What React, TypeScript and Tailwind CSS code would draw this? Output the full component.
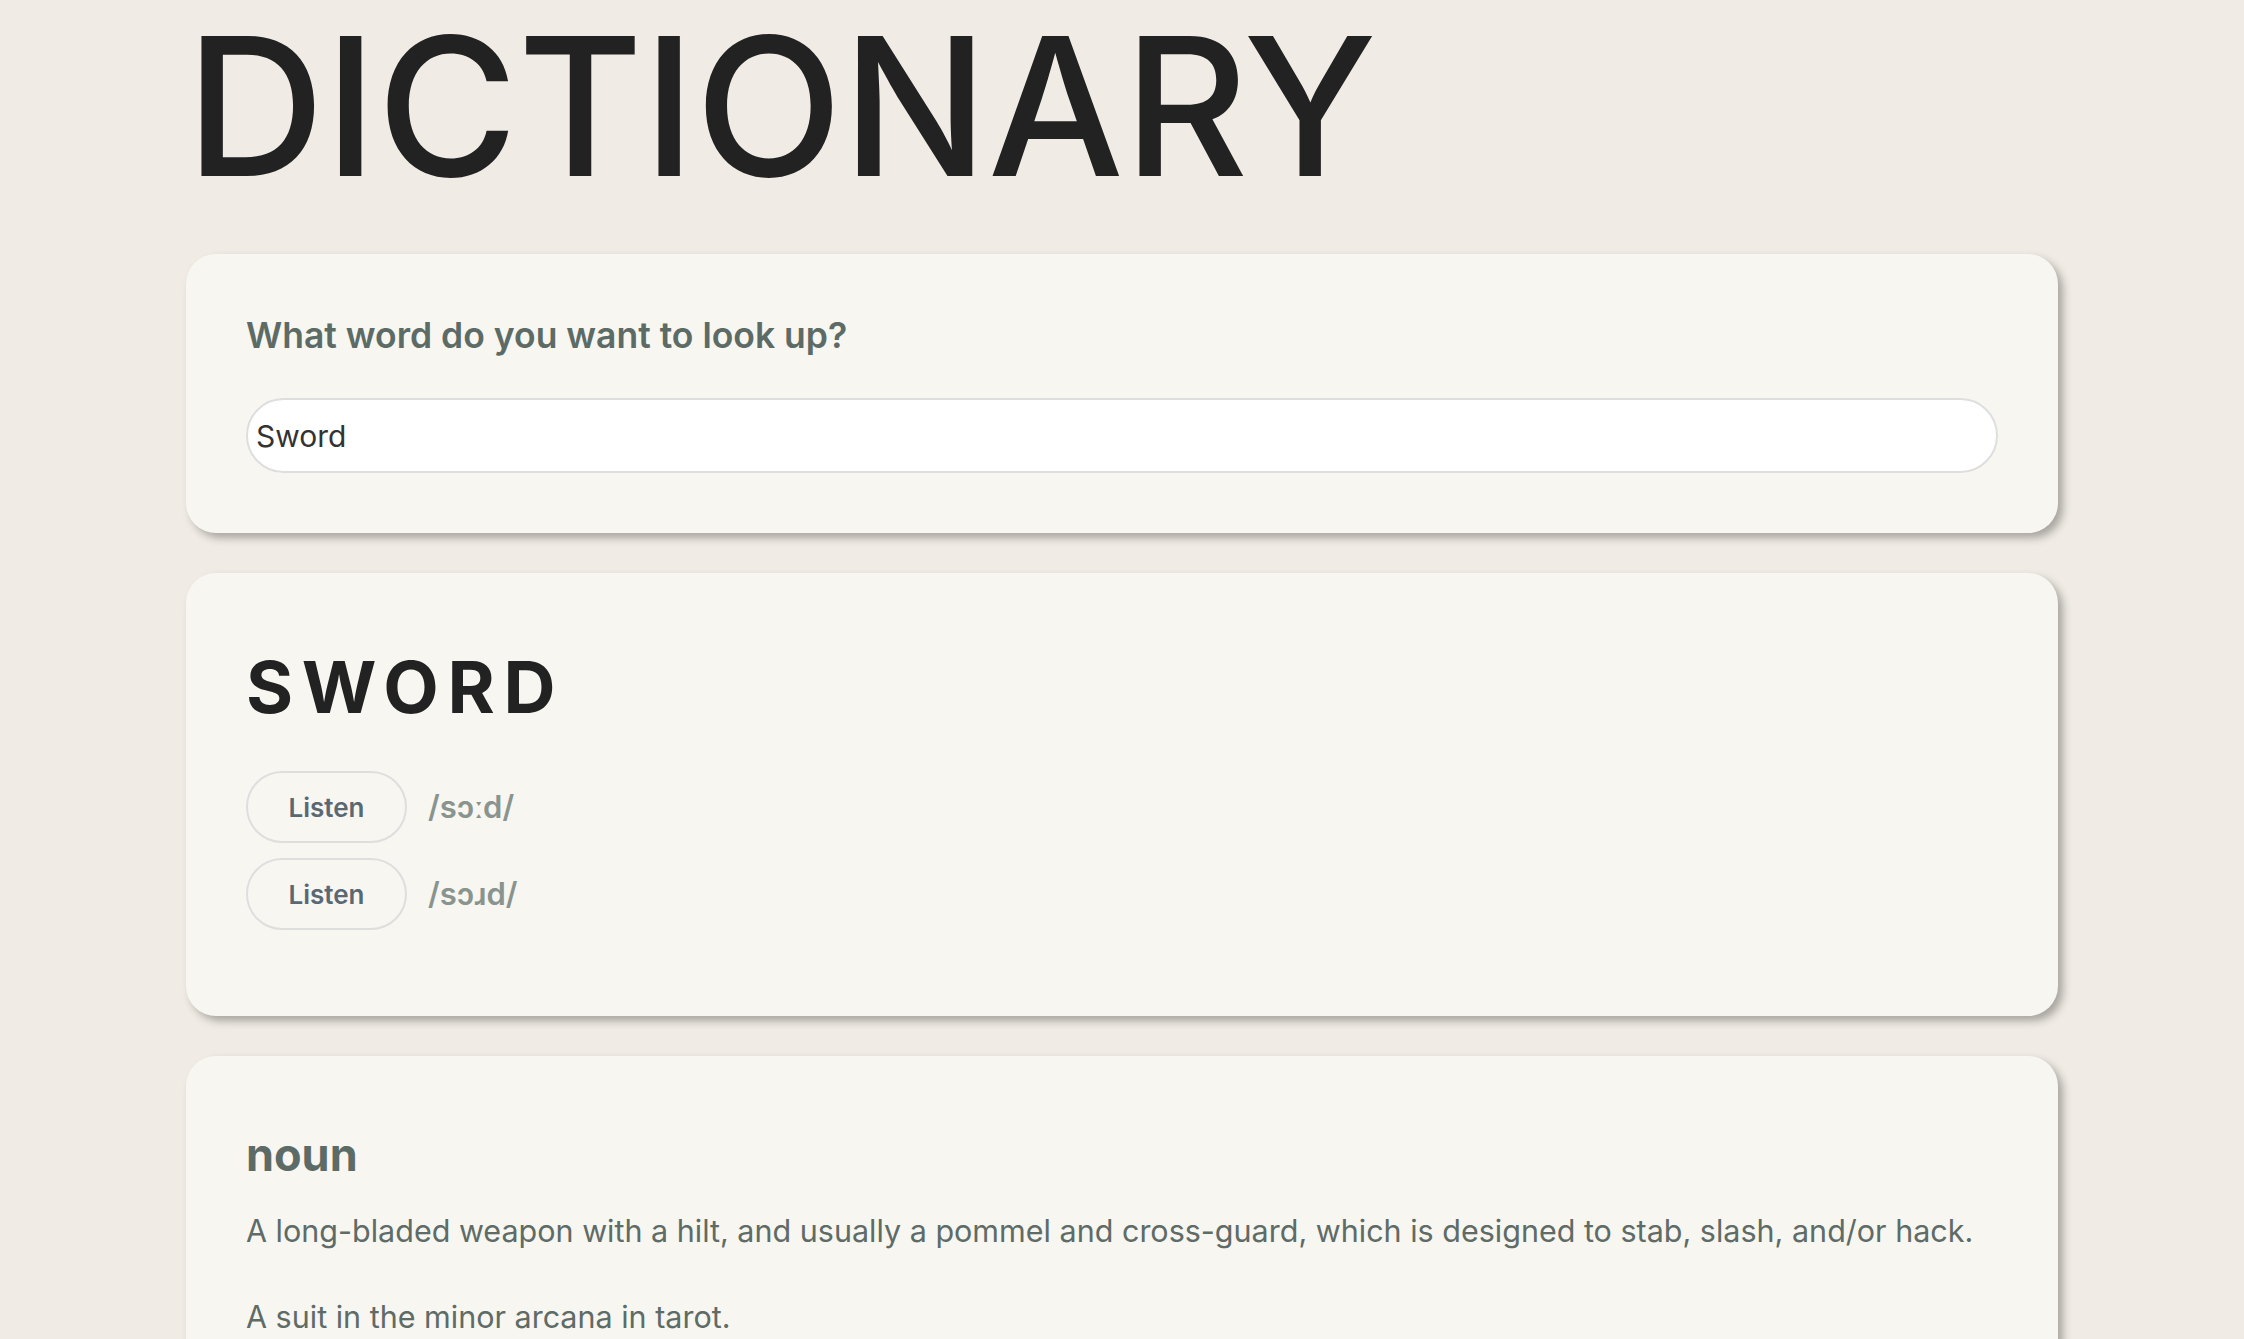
const phonetics = ['/sɔːd/', '/sɔɹd/'];

const definitions = [
  'A long-bladed weapon with a hilt, and usually a pommel and cross-guard, which is designed to stab, slash, and/or hack.',
  'A suit in the minor arcana in tarot.',
  'A card of this suit.',
];

const cardClass =
  'rounded-[30px] bg-[#f7f6f1] p-[60px] shadow-[5px_5px_8px_rgba(0,0,0,0.3)]';

export default function App() {
  return (
    <div className="min-h-screen bg-[#f0ece5] font-['Inter','Noto_Sans',sans-serif]">
      <div className="mx-auto w-[1872px] pb-[40px]">
        <h1 className="pt-[10px] text-[192px] leading-none font-medium text-[#222222]">DICTIONARY</h1>

        <div className="mt-[52px] flex flex-col gap-[40px]">
          <section className={cardClass}>
            <label className="block text-[35.5px] leading-[44px] font-semibold text-[#5c6b66]">
              What word do you want to look up?
            </label>
            <input
              defaultValue="Sword"
              className="mt-[40px] h-[75px] w-full rounded-full border-2 border-[#dedede] bg-white px-[8px] text-[30px] text-[#333333] outline-none"
            />
          </section>

          <section className={cardClass}>
            <h2 className="text-[72px] leading-[1.5] font-bold tracking-[0.12em] text-[#222222]">SWORD</h2>
            <div className="mt-[30px] mb-[26px] flex flex-col gap-[15px]">
              {phonetics.map((p) => (
                <div key={p} className="flex items-center gap-[21px]">
                  <button className="h-[72px] w-[161px] rounded-full border-2 border-[#dedede] text-[26px] font-semibold text-[#5a6874]">
                    Listen
                  </button>
                  <span className="text-[31px] font-semibold text-[#8a948f]">{p}</span>
                </div>
              ))}
            </div>
          </section>

          <section className={cardClass}>
            <h3 className="pt-[5px] text-[45px] leading-[1.5] font-bold text-[#5c6b66]">noun</h3>
            <div className="mt-[19px] flex flex-col gap-[41px]">
              {definitions.map((d) => (
                <p key={d} className="text-[30.5px] leading-[45px] text-[#5e6b66]">
                  {d}
                </p>
              ))}
            </div>
          </section>
        </div>
      </div>
    </div>
  );
}
